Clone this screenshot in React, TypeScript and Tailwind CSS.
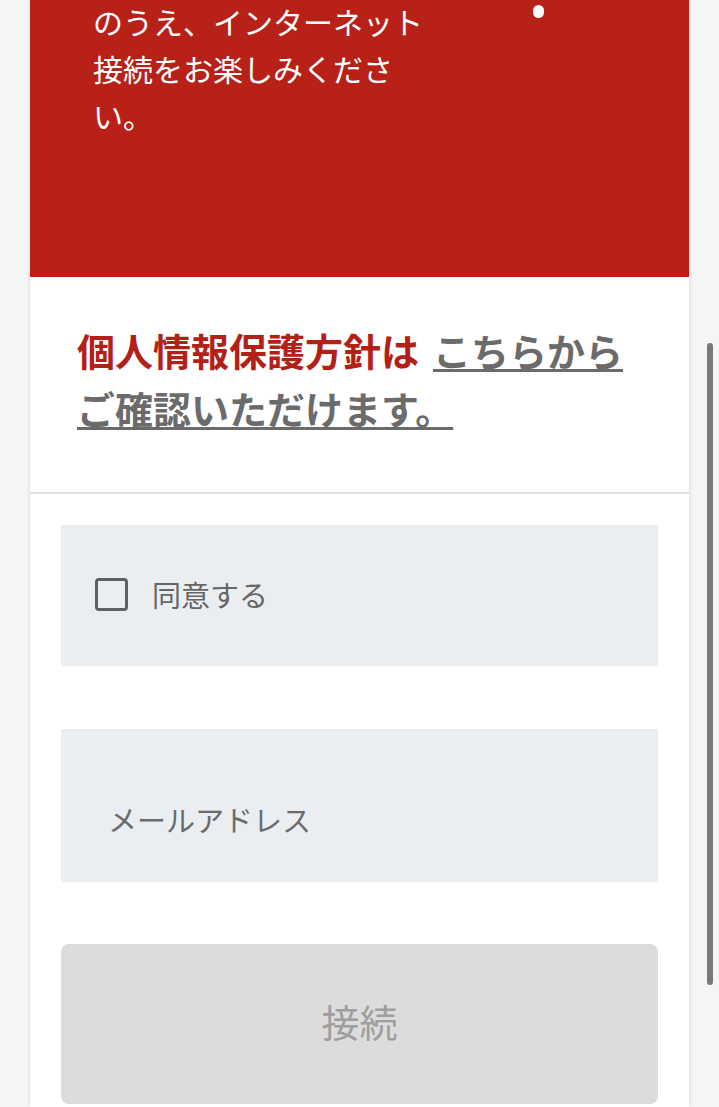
import React from "react";

export default function App() {
  return (
    <div
      className="relative h-[1107px] w-full overflow-hidden bg-[#f5f5f5]"
      style={{ fontFamily: '"Noto Sans CJK JP", "Noto Sans", sans-serif' }}
    >
      <div className="ml-[30px] w-[659px] bg-white shadow-[0_0_4px_rgba(0,0,0,0.14)]">
        {/* red panel */}
        <div className="relative flex h-[277px] flex-col bg-[#b72117] pl-[63px]">
          <p className="-mt-[2px] w-[345px] text-[30px] leading-[47px] text-white">
            のうえ、インターネット接続をお楽しみください。
          </p>
          <span className="absolute left-[503px] top-[5px] h-[13px] w-[11px] rounded-full bg-white" />
        </div>

        {/* policy */}
        <div className="border-b-2 border-[#e2e2e2] pb-[55px] pl-[47px] pr-[47px] pt-[44px]">
          <p className="text-[38px] font-bold leading-[58px] text-[#b32017]">
            個人情報保護方針は
            <a
              href="#"
              className="ml-[14px] text-[#6b6b6b] underline decoration-[3px] underline-offset-[3px]"
            >
              こちらからご確認いただけます。
            </a>
          </p>
        </div>

        {/* form */}
        <div className="flex flex-col px-[31px] pt-[31px] pb-[3px]">
          <label className="flex h-[141px] items-center bg-[#ebeef1] pb-[2px] pl-[34px]">
            <span className="h-[33px] w-[33px] rounded-[4px] border-[3px] border-[#606060] bg-transparent" />
            <span className="ml-[24px] text-[29px] text-[#666666]">同意する</span>
          </label>

          <input
            type="text"
            placeholder="メールアドレス"
            className="mt-[63px] h-[153px] w-full bg-[#ebeef1] pl-[47px] pt-[26px] text-[29px] text-[#555] outline-none placeholder:text-[#6b6b6b]"
          />

          <button
            type="button"
            className="mt-[62px] flex h-[160px] w-full items-center justify-center rounded-[8px] bg-[#dcdcdc] pb-[8px] text-[38px] text-[#9e9e9e]"
          >
            接続
          </button>
        </div>
      </div>

      {/* overlay scroll indicator */}
      <div className="absolute left-[707px] top-[343px] h-[642px] w-[6px] rounded-full bg-[#7a7a7a]" />
    </div>
  );
}
